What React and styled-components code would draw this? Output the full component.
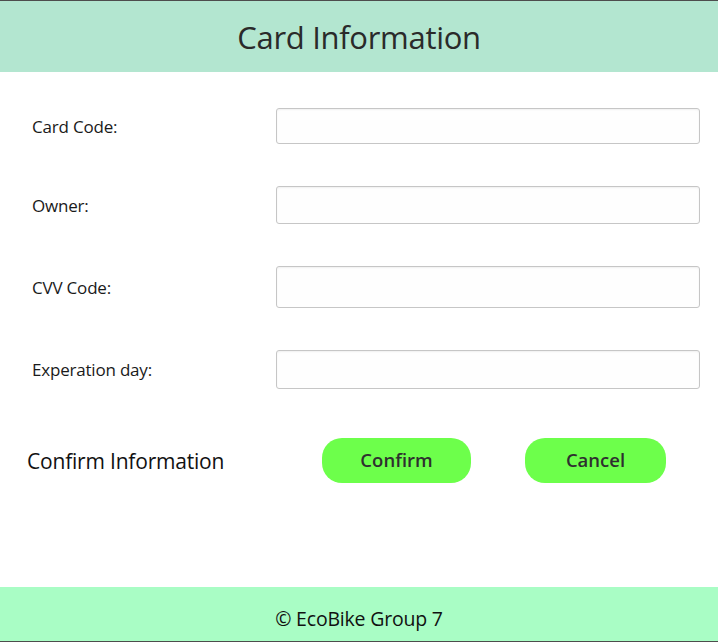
import React from 'react';
import styled, { createGlobalStyle } from 'styled-components';

const GlobalStyle = createGlobalStyle`
  html, body {
    margin: 0;
    padding: 0;
    background: #ffffff;
  }
  * {
    box-sizing: border-box;
  }
`

const Page = styled.div`
  display: flex;
  flex-direction: column;
  width: 718px;
  height: 642px;
  border-top: 1px solid #4d4d4d;
  border-bottom: 1px solid #4d4d4d;
  font-family: "Open Sans", "Noto Sans", sans-serif;
  color: #1a1a1a;
  background: #ffffff;
`

const Header = styled.div`
  display: flex;
  align-items: center;
  justify-content: center;
  height: 71px;
  background-color: #b3e6d0;
`

const Title = styled.h1`
  margin: 0;
  font-size: 31px;
  font-weight: 400;
  color: #2a2a2a;
  letter-spacing: -0.3px;
`

const Form = styled.div`
  display: flex;
  flex-direction: column;
  gap: 42px;
  padding: 36px 18px 0 32px;
`

const Row = styled.div`
  display: grid;
  grid-template-columns: 244px 1fr;
  align-items: center;
`

const Label = styled.label`
  font-size: 17px;
  color: #1a1a1a;
  letter-spacing: -0.2px;
`

const Field = styled.input`
  height: ${p => p.h}px;
  width: 100%;
  border: 1px solid #c6c6c6;
  border-radius: 3px;
  background: #fefefe;
  box-shadow: inset 0 1px 2px rgba(0, 0, 0, 0.06);
  outline: none;
  padding: 0 8px;
  font-family: inherit;
  font-size: 15px;
`

const ConfirmRow = styled.div`
  display: flex;
  align-items: center;
  padding: 49px 0 0 27px;
`

const ConfirmText = styled.span`
  width: 295px;
  font-size: 21px;
  color: #111;
  letter-spacing: -0.2px;
`

const ActionButton = styled.button`
  width: ${p => p.w}px;
  height: 45px;
  margin-right: ${p => p.gap || 0}px;
  border: none;
  border-radius: 20px;
  background-color: #6dff4b;
  color: #2f2f2f;
  font-family: inherit;
  font-size: 18.5px;
  font-weight: 600;
  line-height: 1;
  cursor: pointer;
`

const Footer = styled.div`
  display: flex;
  align-items: center;
  justify-content: center;
  margin-top: auto;
  height: 54px;
  padding-top: 8px;
  background-color: #a9fdc5;
  font-size: 19.5px;
  color: #111;
  letter-spacing: -0.2px;
`

const fields = [
  { label: 'Card Code:', h: 36 },
  { label: 'Owner:', h: 38 },
  { label: 'CVV Code:', h: 42 },
  { label: 'Experation day:', h: 39 },
]

const App = () => {
  return (
    <Page>
      <GlobalStyle />
      <Header>
        <Title>Card Information</Title>
      </Header>
      <Form>
        {fields.map(f => (
          <Row key={f.label}>
            <Label>{f.label}</Label>
            <Field h={f.h} />
          </Row>
        ))}
      </Form>
      <ConfirmRow>
        <ConfirmText>Confirm Information</ConfirmText>
        <ActionButton w={149} gap={54}>Confirm</ActionButton>
        <ActionButton w={141}>Cancel</ActionButton>
      </ConfirmRow>
      <Footer>© EcoBike Group 7</Footer>
    </Page>
  )
}

export default App
